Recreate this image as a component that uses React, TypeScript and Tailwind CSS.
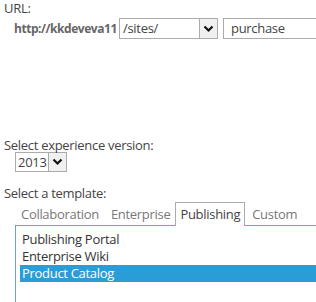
import React from "react";

const Chevron = () => (
  <svg width="11" height="8" viewBox="0 0 11 8">
    <polyline points="1.5,1.5 5.5,5.5 9.5,1.5" fill="none" stroke="#111" strokeWidth="2.2" />
  </svg>
);

export default function App() {
  const font = { fontFamily: '"Open Sans", "Noto Sans", sans-serif' };
  return (
    <div className="w-[316px] h-[302px] bg-white overflow-hidden text-[#444] tracking-[-0.3px]" style={font}>
      <div className="pl-[4px] pt-[0px] text-[13px] leading-[16px]">URL:</div>
      <div className="flex items-center mt-[2px] h-[21px]">
        <div className="ml-[14px] w-[105px] text-[12px] font-bold text-[#666] whitespace-nowrap tracking-[-0.45px]">http://kkdeveva11</div>
        <div className="flex w-[99px] h-[21px] border border-[#ababab] bg-white">
          <div className="flex-1 text-[13px] leading-[19px] pl-[3px] text-[#444]">/sites/</div>
          <div className="w-[18px] h-full border-l border-[#ababab] bg-[#f0f0f0] flex items-center justify-center">
            <Chevron />
          </div>
        </div>
        <div className="ml-[5px] flex-1 h-[21px] border border-r-0 border-[#ababab] text-[13px] leading-[19px] pl-[7px] text-[#444]">purchase</div>
      </div>
      <div className="h-[98px]" />
      <div className="pl-[4px] text-[13px] leading-[16px]">Select experience version:</div>
      <div className="ml-[15px] mt-[-1px] flex w-[52px] h-[20px] border border-[#ababab]">
        <div className="flex-1 text-[13px] leading-[18px] pl-[2px] text-[#444]">2013</div>
        <div className="w-[18px] h-full border-l border-[#ababab] bg-[#f0f0f0] flex items-center justify-center">
          <Chevron />
        </div>
      </div>
      <div className="pl-[4px] mt-[13px] text-[13px] leading-[16px]">Select a template:</div>
      <div className="ml-[15px] mt-[2px] flex items-end h-[23px] border-b border-[#6fa3b8] relative">
        <div className="pl-[6px] pr-[7px] h-[22px] text-[13px] leading-[22px] text-[#777]">Collaboration</div>
        <div className="px-[5px] h-[22px] text-[13px] leading-[22px] text-[#777]">Enterprise</div>
        <div className="px-[4px] h-[24px] mb-[-1px] bg-white border border-b-0 border-[#ababab] text-[13px] leading-[22px] text-[#444]">Publishing</div>
        <div className="px-[7px] h-[22px] text-[13px] leading-[22px] text-[#777]">Custom</div>
      </div>
      <div className="ml-[15px] h-[80px] border-l border-[#6fa3b8] pt-[5px] pl-[4px] text-[13px] leading-[17px] text-[#333]">
        <div className="pl-[2px] h-[17px]">Publishing Portal</div>
        <div className="pl-[2px] h-[17px]">Enterprise Wiki</div>
        <div className="pl-[2px] h-[17px] bg-[#2b9dd6] text-white">Product Catalog</div>
      </div>
    </div>
  );
}
